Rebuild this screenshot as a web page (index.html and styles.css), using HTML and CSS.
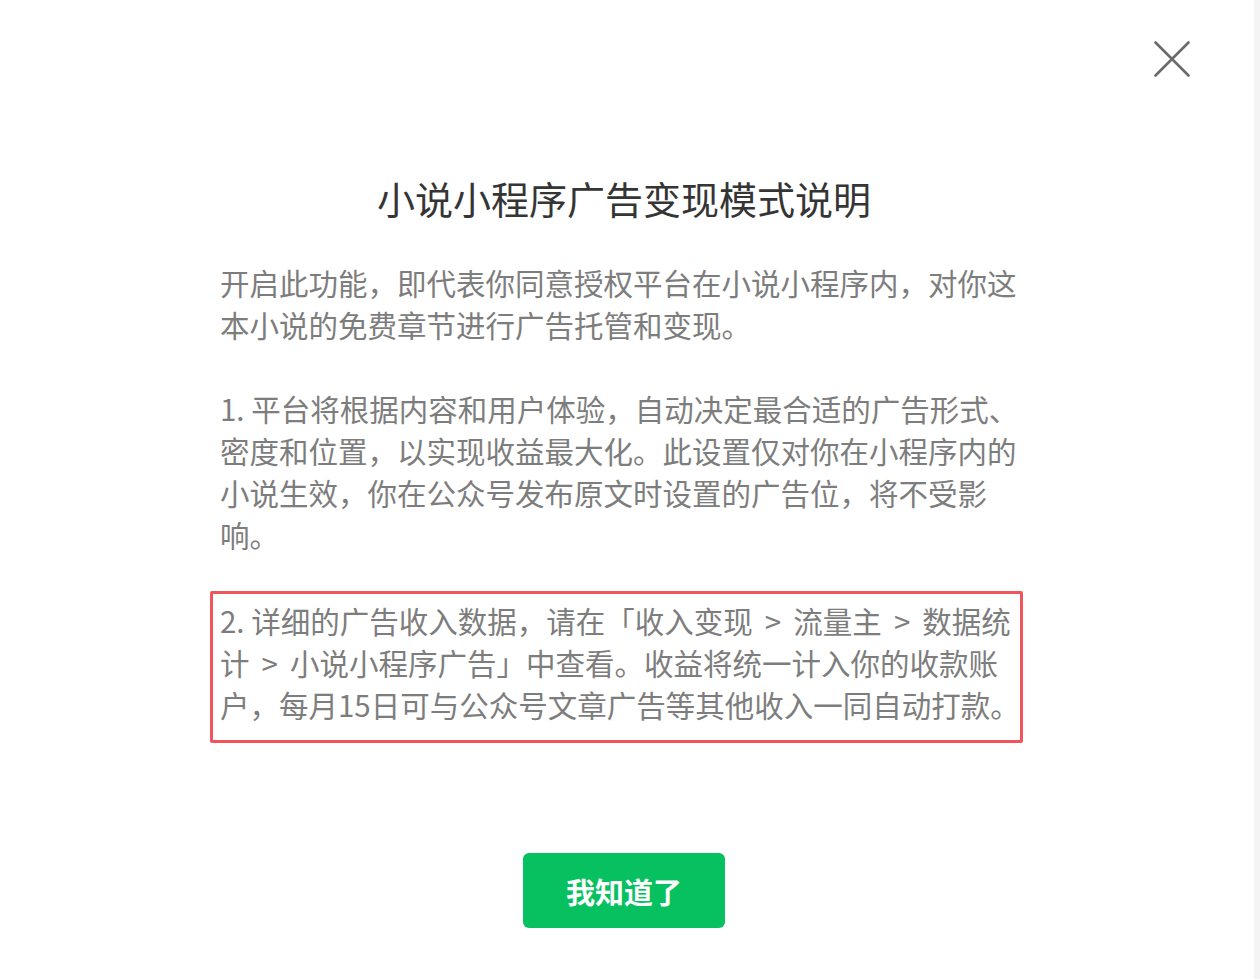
FILE: index.html
```html
<!DOCTYPE html>
<html lang="zh-CN">
<head>
<meta charset="utf-8">
<title>小说小程序广告变现模式说明</title>
<link rel="stylesheet" href="styles.css">
</head>
<body>
<div class="page">
  <div class="dialog">
    <button class="close" aria-label="关闭">
      <svg width="36" height="36" viewBox="0 0 36 36"><path d="M1.5 1.5 L34.5 34.5 M34.5 1.5 L1.5 34.5" stroke="#6b6b6b" stroke-width="2.6" fill="none" stroke-linecap="round"/></svg>
    </button>
    <h1 class="title">小说小程序广告变现模式说明</h1>
    <div class="content">
      <p class="para">开启此功能，即代表你同意授权平台在小说小程序内，对你这<br>本小说的免费章节进行广告托管和变现。</p>
      <p class="para">1. 平台将根据内容和用户体验，自动决定最合适的广告形式、<br>密度和位置，以实现收益最大化。此设置仅对你在小程序内的<br>小说生效，你在公众号发布原文时设置的广告位，将不受影<br>响。</p>
      <div class="highlight">
        <p class="para"><span class="num">2. </span>详细的广告收入数据，请在「收入变现 &gt; 流量主 &gt; 数据统<br>计 &gt; 小说小程序广告」中查看。收益将统一计入你的收款账<br>户，每月15日可与公众号文章广告等其他收入一同自动打款。</p>
      </div>
    </div>
    <div class="actions">
      <button class="btn-primary">我知道了</button>
    </div>
  </div>
  <div class="scroll-track"></div>
</div>
</body>
</html>
```

FILE: styles.css
```css
html, body {
  margin: 0;
  padding: 0;
  height: 100%;
}
body {
  font-family: "Noto Sans CJK SC", "Noto Sans", sans-serif;
  background: #ffffff;
}
.page {
  display: flex;
  height: 979px;
}
.dialog {
  flex: 1;
  position: relative;
  background: #ffffff;
  display: flex;
  flex-direction: column;
  align-items: center;
}
.scroll-track {
  width: 6px;
  background: #f4f4f4;
}
.close {
  position: absolute;
  top: 41px;
  left: 1154px;
  width: 36px;
  height: 36px;
  padding: 0;
  border: none;
  background: none;
  cursor: pointer;
}
.close svg {
  display: block;
}
.title {
  margin: 173px 0 0;
  font-size: 38px;
  line-height: 50px;
  font-weight: 400;
  color: #353535;
  text-align: center;
  padding-right: 6px;
}
.content {
  align-self: stretch;
  padding-left: 220px;
  margin-top: 38px;
}
.para {
  margin: 0 0 42px;
  font-size: 29.5px;
  line-height: 42px;
  color: #7d7d7d;
  white-space: nowrap;
}
.highlight {
  width: 800px;
  margin: -6px 0 0 -10px;
  border: 3px solid #f2545b;
  border-radius: 2px;
  padding: 5px 0 15px 7px;
}
.highlight .para {
  margin: 0;
  word-spacing: 5.5px;
}
.highlight .num {
  word-spacing: 0;
}
.actions {
  margin-top: 110px;
  padding-right: 6px;
}
.btn-primary {
  width: 202px;
  height: 75px;
  border: none;
  border-radius: 6px;
  background: #07c160;
  color: #ffffff;
  font-family: "Noto Sans CJK SC", sans-serif;
  font-size: 29px;
  font-weight: 700;
  cursor: pointer;
}
```
